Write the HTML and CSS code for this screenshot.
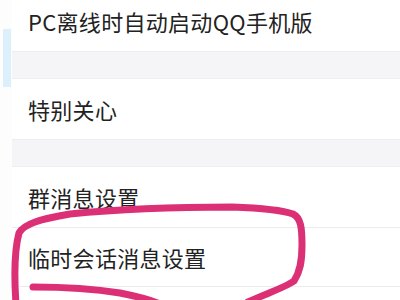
FILE: index.html
```html
<!DOCTYPE html>
<html lang="zh-CN">
<head>
<meta charset="utf-8">
<title>设置</title>
<link rel="stylesheet" href="styles.css">
</head>
<body>
<div class="screen">
  <div class="gutter"><div class="peek"></div></div>
  <div class="list">
    <div class="row first"><span>PC离线时自动启动QQ手机版</span></div>
    <div class="gap"></div>
    <div class="row"><span>特别关心</span></div>
    <div class="gap"></div>
    <div class="row divided"><span>群消息设置</span></div>
    <div class="row divided"><span>临时会话消息设置</span></div>
    <div class="row"></div>
  </div>
  <svg class="mark" width="400" height="300" viewBox="0 0 400 300">
    <path d="M16 304 C14 275 15 248 19 233 C24 224 40 219 70 214 C120 209 180 207 232 207 C260 208 282 210 293 214 C301 218 302 228 302 245 C302 262 300 272 294 281 C284 288 265 294 248 302" />
    <path d="M33 287 C60 287 95 289 120 293 C135 296 148 299 160 304" />
  </svg>
</div>
</body>
</html>
```

FILE: styles.css
```css
html, body {
  margin: 0;
  padding: 0;
  background: #ffffff;
}
.screen {
  position: relative;
  width: 400px;
  height: 300px;
  overflow: hidden;
  display: flex;
  background: #fdfdfd;
  font-family: "Noto Sans CJK SC", "Noto Sans", sans-serif;
}
.gutter {
  width: 12px;
  flex: none;
  padding-top: 29px;
}
.peek {
  width: 8px;
  height: 58px;
  margin-left: 3px;
  background: #dcf0fb;
}
.list {
  flex: 1;
  display: flex;
  flex-direction: column;
}
.row {
  height: 60px;
  flex: none;
  display: flex;
  align-items: center;
  padding-left: 16px;
  box-sizing: border-box;
  background: #ffffff;
  color: #222222;
  font-size: 22px;
  letter-spacing: 0.3px;
}
.row.first {
  margin-top: -9px;
  padding-top: 0;
}
.row.divided {
  height: 61px;
  border-bottom: 1px solid #ececef;
}
.row.divided + .row.divided {
  height: 59px;
}
.gap {
  height: 26px;
  flex: none;
  background: #f5f5f8;
  border-top: 1px solid #eeeef1;
  border-bottom: 1px solid #eeeef1;
}
.mark {
  position: absolute;
  left: 0;
  top: 0;
  fill: none;
  stroke: #dc3076;
  stroke-width: 7;
  stroke-linecap: round;
  stroke-linejoin: round;
}
```
